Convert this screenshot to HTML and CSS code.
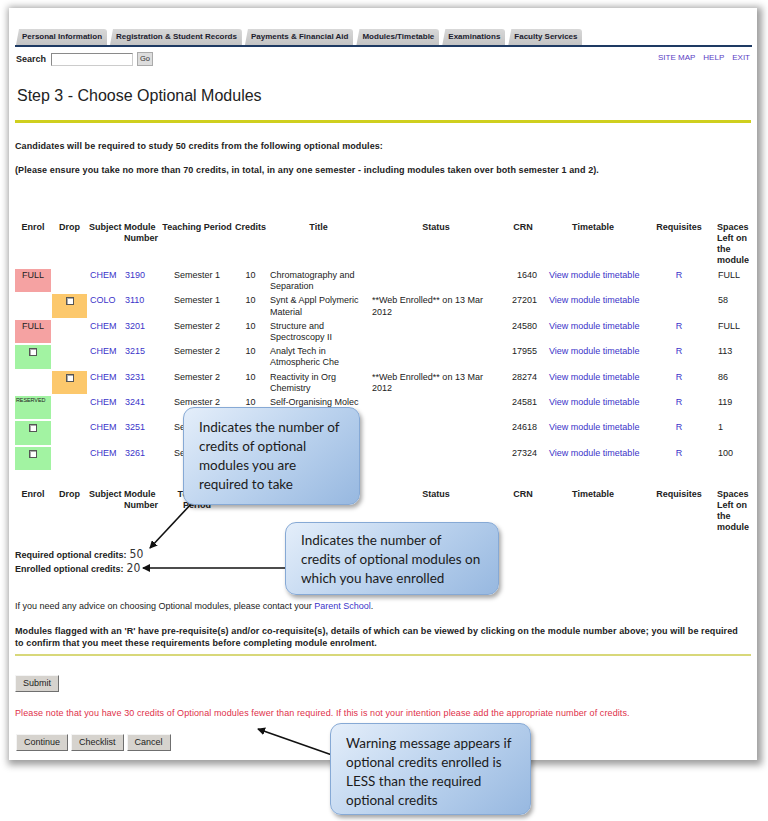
FILE: index.html
```html
<!DOCTYPE html>
<html>
<head>
<meta charset="utf-8">
<link rel="stylesheet" href="styles.css">
</head>
<body>
<div class="frame">
  <div class="tabs">
    <div class="tab">Personal Information</div>
    <div class="tab">Registration &amp; Student Records</div>
    <div class="tab">Payments &amp; Financial Aid</div>
    <div class="tab">Modules/Timetable</div>
    <div class="tab">Examinations</div>
    <div class="tab">Faculty Services</div>
  </div>
  <div class="searchrow">
    <span class="lbl">Search</span>
    <span class="sinput"></span>
    <span class="go">Go</span>
    <span class="toplinks"><a>SITE MAP</a><a>HELP</a><a>EXIT</a></span>
  </div>
  <h1 class="title">Step 3 - Choose Optional Modules</h1>
  <div class="rule"></div>
  <p class="b p1">Candidates will be required to study 50 credits from the following optional modules:</p>
  <p class="b p2">(Please ensure you take no more than 70 credits, in total, in any one semester - including modules taken over both semester 1 and 2).</p>

  <table class="mods">
    <colgroup>
      <col class="c-enrol"><col class="c-drop"><col class="c-subj"><col class="c-num"><col class="c-period"><col class="c-cred"><col class="c-title"><col class="c-status"><col class="c-crn"><col class="c-tt"><col class="c-req"><col class="c-sp">
    </colgroup>
    <tr class="hd">
      <th>Enrol</th><th>Drop</th><th class="l">Subject</th><th class="l">Module Number</th><th>Teaching Period</th><th>Credits</th><th>Title</th><th>Status</th><th>CRN</th><th>Timetable</th><th>Requisites</th><th class="l">Spaces Left on the module</th>
    </tr>
    <tr class="r">
      <td class="full">FULL</td><td></td><td><a>CHEM</a></td><td><a>3190</a></td><td class="c">Semester 1</td><td class="c">10</td><td>Chromatography and<br>Separation</td><td></td><td class="rt">1640</td><td class="tt"><a>View module timetable</a></td><td class="c"><a>R</a></td><td>FULL</td>
    </tr>
    <tr class="r">
      <td></td><td class="drop c"><span class="cb"></span></td><td><a>COLO</a></td><td><a>3110</a></td><td class="c">Semester 1</td><td class="c">10</td><td>Synt &amp; Appl Polymeric<br>Material</td><td>**Web Enrolled** on 13 Mar<br>2012</td><td class="rt">27201</td><td class="tt"><a>View module timetable</a></td><td></td><td>58</td>
    </tr>
    <tr class="r">
      <td class="full">FULL</td><td></td><td><a>CHEM</a></td><td><a>3201</a></td><td class="c">Semester 2</td><td class="c">10</td><td>Structure and<br>Spectroscopy II</td><td></td><td class="rt">24580</td><td class="tt"><a>View module timetable</a></td><td class="c"><a>R</a></td><td>FULL</td>
    </tr>
    <tr class="r">
      <td class="ok c"><span class="cb"></span></td><td></td><td><a>CHEM</a></td><td><a>3215</a></td><td class="c">Semester 2</td><td class="c">10</td><td>Analyt Tech in<br>Atmospheric Che</td><td></td><td class="rt">17955</td><td class="tt"><a>View module timetable</a></td><td class="c"><a>R</a></td><td>113</td>
    </tr>
    <tr class="r">
      <td></td><td class="drop c"><span class="cb"></span></td><td><a>CHEM</a></td><td><a>3231</a></td><td class="c">Semester 2</td><td class="c">10</td><td>Reactivity in Org<br>Chemistry</td><td>**Web Enrolled** on 13 Mar<br>2012</td><td class="rt">28274</td><td class="tt"><a>View module timetable</a></td><td class="c"><a>R</a></td><td>86</td>
    </tr>
    <tr class="r">
      <td class="ok res">RESERVED</td><td></td><td><a>CHEM</a></td><td><a>3241</a></td><td class="c">Semester 2</td><td class="c">10</td><td>Self-Organising Molec</td><td></td><td class="rt">24581</td><td class="tt"><a>View module timetable</a></td><td class="c"><a>R</a></td><td>119</td>
    </tr>
    <tr class="r">
      <td class="ok c"><span class="cb"></span></td><td></td><td><a>CHEM</a></td><td><a>3251</a></td><td class="c">Semester 2</td><td class="c">10</td><td></td><td></td><td class="rt">24618</td><td class="tt"><a>View module timetable</a></td><td class="c"><a>R</a></td><td>1</td>
    </tr>
    <tr class="r">
      <td class="ok c"><span class="cb"></span></td><td></td><td><a>CHEM</a></td><td><a>3261</a></td><td class="c">Semester 2</td><td class="c">10</td><td></td><td></td><td class="rt">27324</td><td class="tt"><a>View module timetable</a></td><td class="c"><a>R</a></td><td>100</td>
    </tr>
    <tr class="gap"><td colspan="12"></td></tr>
    <tr class="hd">
      <th>Enrol</th><th>Drop</th><th class="l">Subject</th><th class="l">Module Number</th><th>Teaching<br>Period</th><th>Credits</th><th>Title</th><th>Status</th><th>CRN</th><th>Timetable</th><th>Requisites</th><th class="l">Spaces Left on the module</th>
    </tr>
  </table>

  <div class="credits">
    <div class="cl"><b>Required optional credits:</b> <span class="num">50</span></div>
    <div class="cl"><b>Enrolled optional credits:</b> <span class="num">20</span></div>
  </div>

  <p class="advice">If you need any advice on choosing Optional modules, please contact your <a>Parent School</a>.</p>
  <p class="b flagged">Modules flagged with an 'R' have pre-requisite(s) and/or co-requisite(s), details of which can be viewed by clicking on the module number above; you will be required<br>to confirm that you meet these requirements before completing module enrolment.</p>
  <div class="rule thin"></div>
  <div class="submitrow"><span class="btn">Submit</span></div>
  <p class="warn">Please note that you have 30 credits of Optional modules fewer than required. If this is not your intention please add the appropriate number of credits.</p>
  <div class="btnrow"><span class="btn">Continue</span><span class="btn">Checklist</span><span class="btn">Cancel</span></div>
</div>

<svg class="arrows" width="768" height="821" viewBox="0 0 768 821">
  <defs>
    <marker id="ah" markerWidth="8" markerHeight="8" refX="7" refY="4" orient="auto" markerUnits="userSpaceOnUse">
      <path d="M0,0 L8,4 L0,8 Z" fill="#111"/>
    </marker>
  </defs>
  <line x1="192" y1="503" x2="150" y2="548" stroke="#111" stroke-width="1.6" marker-end="url(#ah)"/>
  <line x1="288" y1="568" x2="143" y2="568" stroke="#111" stroke-width="1.6" marker-end="url(#ah)"/>
  <line x1="332" y1="755" x2="258" y2="729" stroke="#111" stroke-width="1.6" marker-end="url(#ah)"/>
</svg>

<div class="callout co1">Indicates the number of<br>credits of optional<br>modules you are<br>required to take</div>
<div class="callout co2">Indicates the number of<br>credits of optional modules on<br>which you have enrolled</div>
<div class="callout co3">Warning message appears if<br>optional credits enrolled is<br>LESS than the required<br>optional credits</div>
</body>
</html>
```

FILE: styles.css
```css
html, body {
  margin: 0;
  padding: 0;
  background: #fff;
}
body {
  position: relative;
  width: 768px;
  height: 821px;
  overflow: hidden;
  font-family: "Liberation Sans", Arial, sans-serif;
  font-size: 9px;
  color: #222;
}
a {
  color: #3b34c9;
  text-decoration: none;
}
.frame {
  position: relative;
  margin: 8px 0 0 9px;
  width: 748px;
  height: 752px;
  background: #fff;
  box-shadow: 2px 2px 7px 3px rgba(0, 0, 0, 0.38);
  padding: 21px 5px 0 6px;
  box-sizing: border-box;
}
.tabs {
  display: flex;
  gap: 3px;
  height: 16px;
  padding-left: 1px;
  border-bottom: 2px solid #1e3a63;
}
.tab {
  background: linear-gradient(#d8d8d8, #c4c4c4);
  font-weight: bold;
  font-size: 8px;
  line-height: 16px;
  color: #1c1c2e;
  padding: 0 5px 0 6px;
  border-radius: 0 3px 0 0;
  clip-path: polygon(3px 0, 100% 0, 100% 100%, 0 100%);
  white-space: nowrap;
}
.searchrow {
  display: flex;
  align-items: center;
  height: 14px;
  margin-top: 5px;
}
.lbl {
  font-weight: bold;
  margin-left: 1px;
}
.sinput {
  width: 80px;
  height: 11px;
  border: 1px solid #8a8a8a;
  border-right-color: #ccc;
  border-bottom-color: #ccc;
  margin-left: 5px;
  background: #fff;
}
.go {
  width: 14px;
  height: 12px;
  line-height: 12px;
  text-align: center;
  margin-left: 4px;
  background: #ddd;
  border: 1px solid #aaa;
  font-size: 7.5px;
  color: #333;
}
.toplinks {
  margin-left: auto;
  display: flex;
  gap: 8px;
  font-size: 8px;
  margin-right: 2px;
  margin-top: -4px;
}
.toplinks a {
  color: #5a40c4;
}
.title {
  font-size: 16px;
  font-weight: normal;
  line-height: 19px;
  margin: 20px 0 0 2px;
  color: #222;
}
.rule {
  height: 3px;
  background: #cfcf1e;
  margin-top: 15px;
  width: 736px;
}
.rule.thin {
  height: 2px;
  background: #d8d87a;
  margin-top: 5px;
}
p {
  margin: 0;
}
.b {
  font-weight: bold;
  line-height: 11px;
  letter-spacing: 0.1px;
}
.p1 {
  margin-top: 18px;
}
.p2 {
  margin-top: 13px;
}
.mods {
  table-layout: fixed;
  width: 738px;
  border-collapse: separate;
  border-spacing: 1px 2px;
  margin: 44px 0 0 -1px;
}
.c-enrol { width: 36px; }
.c-drop { width: 35px; }
.c-subj { width: 34px; }
.c-num { width: 37px; }
.c-period { width: 72px; }
.c-cred { width: 33px; }
.c-title { width: 101px; }
.c-status { width: 132px; }
.c-crn { width: 40px; }
.c-tt { width: 98px; }
.c-req { width: 72px; }
.c-sp { width: 35px; }
th {
  font-weight: bold;
  vertical-align: top;
  text-align: center;
  line-height: 11px;
  padding: 0 1px 1px;
  white-space: normal;
}
th.l {
  text-align: left;
}
tr.hd {
  height: 43px;
}
td {
  vertical-align: top;
  padding: 1px 2px 0;
  line-height: 11.2px;
  white-space: nowrap;
  overflow: visible;
}
tr.r {
  height: 23.4px;
}
td.c {
  text-align: center;
}
td.rt {
  text-align: right;
  padding-right: 6px;
}
td.tt {
  padding-left: 5px;
}
td.full {
  background: #f5a2a2;
  text-align: center;
}
td.drop {
  background: #fcc86c;
}
td.ok {
  background: #a2f3a2;
}
td.res {
  font-size: 5.5px;
  line-height: 9px;
  padding: 0 1px;
  letter-spacing: -0.1px;
}
.cb {
  display: inline-block;
  width: 6px;
  height: 6px;
  margin-top: 2px;
  border: 1px solid #555;
  background: #fff;
  box-shadow: inset 1px 1px 0 #aaa;
}
tr.gap {
  height: 15px;
}
tr.gap td {
  padding: 0;
}
.credits {
  margin-top: 11px;
}
.cl {
  height: 14px;
  line-height: 14px;
  display: flex;
  align-items: baseline;
  gap: 3px;
}
.credits .num {
  font-size: 12px;
  line-height: 14px;
  font-family: "DejaVu Sans Condensed", "Liberation Sans Narrow", "Liberation Sans", sans-serif;
  font-weight: normal;
  color: #333;
}
.advice {
  margin-top: 26px;
  line-height: 11px;
}
.flagged {
  margin-top: 13px;
  line-height: 12px;
  white-space: nowrap;
}
.submitrow {
  margin-top: 19px;
  display: flex;
}
.btn {
  display: inline-block;
  height: 15px;
  line-height: 15px;
  padding: 0 7px;
  background: #d6d3ce;
  border: 1px solid;
  border-color: #f4f4f4 #6f6f6f #6f6f6f #f4f4f4;
  font-size: 9px;
  color: #222;
}
.warn {
  color: #e0304a;
  margin-top: 16px;
  line-height: 11px;
  letter-spacing: 0.1px;
}
.btnrow {
  display: flex;
  gap: 3px;
  margin-top: 15px;
  margin-left: 1px;
}
.arrows {
  position: absolute;
  left: 0;
  top: 0;
  pointer-events: none;
}
.callout {
  position: absolute;
  box-sizing: border-box;
  font-family: Lato, "Open Sans", sans-serif;
  font-size: 13.5px;
  line-height: 19px;
  color: #1b1b1b;
  background: linear-gradient(140deg, #e4eefa 0%, #bcd3ee 50%, #97b8e0 100%);
  border: 1px solid #86a9d5;
  border-radius: 11px;
  box-shadow: 2px 3px 4px rgba(0, 0, 0, 0.35);
  white-space: nowrap;
}
.co1 {
  left: 183px;
  top: 407px;
  width: 177px;
  height: 98px;
  padding: 10px 0 0 15px;
}
.co2 {
  left: 285px;
  top: 522px;
  width: 214px;
  height: 73px;
  padding: 8px 0 0 15px;
}
.co3 {
  left: 330px;
  top: 723px;
  width: 201px;
  height: 92px;
  padding: 10px 0 0 15px;
}
```
